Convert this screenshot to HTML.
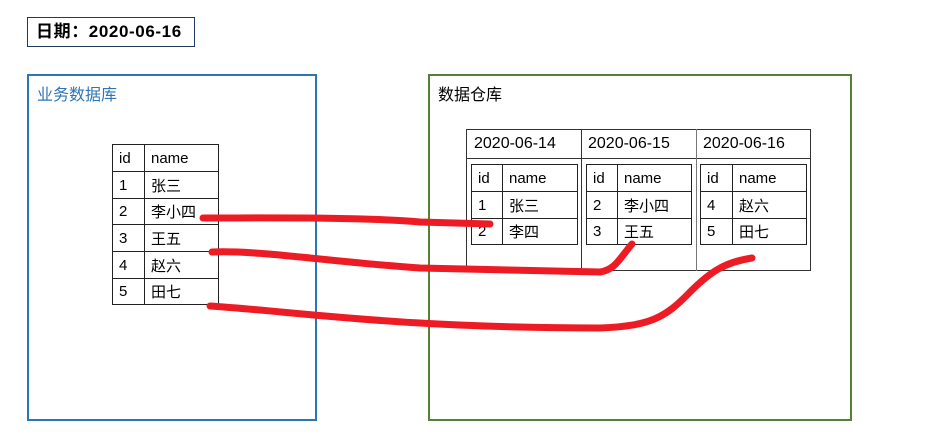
<!DOCTYPE html>
<html><head><meta charset="utf-8"><style>
body{margin:0;width:925px;height:448px;background:#fff;position:relative;overflow:hidden;font-family:"Liberation Sans","Noto Sans CJK SC",sans-serif;}
.a{position:absolute;box-sizing:border-box}
table{border-collapse:collapse;position:absolute;font-size:15px;color:#000}
td{border:1.5px solid #222;padding:0 0 0 6px;height:25px;box-sizing:border-box}
</style></head><body>
<div class="a" style="left:27px;top:17px;width:168px;height:30px;border:1.5px solid #1f3864;font-weight:bold;font-size:17px;line-height:28px;padding-left:8px;letter-spacing:0.6px">日期：2020-06-16</div>
<div class="a" style="left:27px;top:74px;width:290px;height:347px;border:2px solid #2e75b6;color:#2e75b6;font-size:16px;padding:5px 0 0 8px">业务数据库</div>
<div class="a" style="left:428px;top:74px;width:424px;height:347px;border:2px solid #548235;font-size:16px;padding:5px 0 0 8px">数据仓库</div>
<table style="left:112px;top:144px;width:107px">
<tr><td style="width:32px;height:27px">id</td><td>name</td></tr>
<tr><td style="height:27px">1</td><td>张三</td></tr>
<tr><td style="height:26px">2</td><td>李小四</td></tr>
<tr><td style="height:27px">3</td><td>王五</td></tr>
<tr><td style="height:27px">4</td><td>赵六</td></tr>
<tr><td style="height:26px">5</td><td>田七</td></tr>
</table>
<div class="a" style="left:466px;top:129px;width:345px;height:142px;border:1.5px solid #333"></div>
<div class="a" style="left:466px;top:158px;width:345px;height:0;border-top:1.5px solid #333"></div>
<div class="a" style="left:581px;top:129px;width:0;height:142px;border-left:1.5px solid #333"></div>
<div class="a" style="left:696px;top:129px;width:0;height:142px;border-left:1.5px solid #777"></div>
<div class="a" style="left:474px;top:135px;font-size:16px">2020-06-14</div>
<div class="a" style="left:588px;top:135px;font-size:16px">2020-06-15</div>
<div class="a" style="left:703px;top:135px;font-size:16px">2020-06-16</div>
<table style="left:471px;top:164px;width:107px"><tr><td style="width:31px;height:27px">id</td><td>name</td></tr><tr><td style="height:27px">1</td><td>张三</td></tr><tr><td style="height:26px">2</td><td>李四</td></tr></table>
<table style="left:586px;top:164px;width:106px"><tr><td style="width:31px;height:27px">id</td><td>name</td></tr><tr><td style="height:27px">2</td><td>李小四</td></tr><tr><td style="height:26px">3</td><td>王五</td></tr></table>
<table style="left:700px;top:164px;width:107px"><tr><td style="width:32px;height:27px">id</td><td>name</td></tr><tr><td style="height:27px">4</td><td>赵六</td></tr><tr><td style="height:26px">5</td><td>田七</td></tr></table>
<svg class="a" style="left:0;top:0" width="925" height="448">
<g fill="none" stroke="#ed1c24" stroke-width="7" stroke-linecap="round">
<path d="M203,218 C280,218 360,217 420,222 L490,224"/>
<path d="M212,252 C260,250 330,262 420,268 L600,272 C615,270 620,258 632,244"/>
<path d="M210,306 C300,312 400,328 600,328 C650,326 665,318 690,292 C710,272 725,262 752,258"/>
</g></svg>
</body></html>
